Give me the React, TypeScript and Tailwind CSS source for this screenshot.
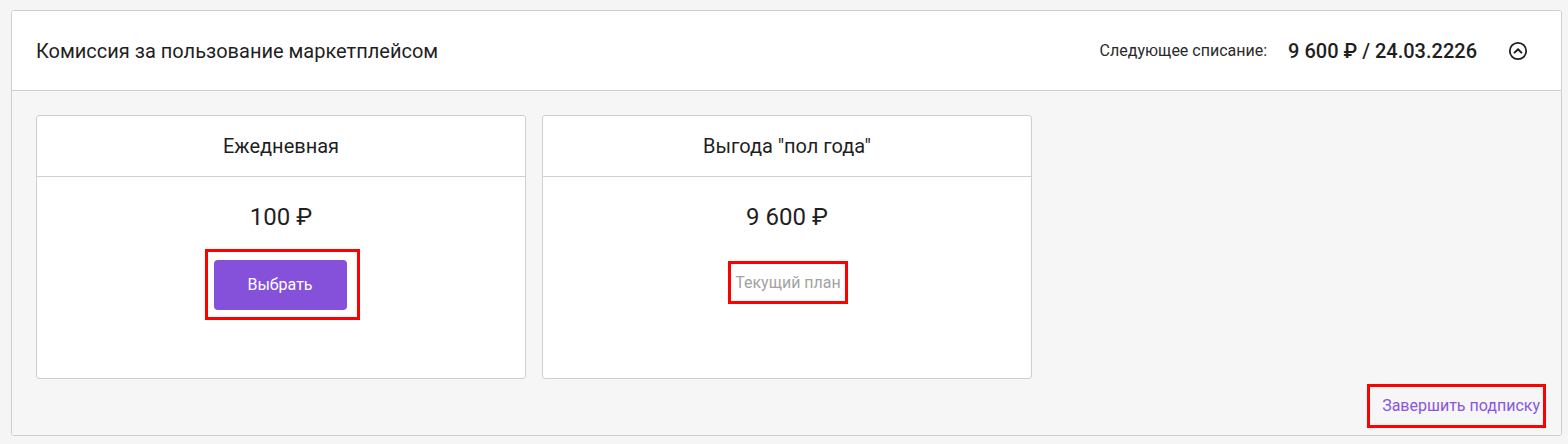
import * as React from "react";

type Plan = {
  title: string;
  price: string;
  current?: boolean;
};

const plans: Plan[] = [
  { title: "Ежедневная", price: "100 ₽" },
  { title: 'Выгода "пол года"', price: "9 600 ₽", current: true },
];

// chevron up in a circle, as in the header
const CollapseIcon: React.FC = () => (
  <svg width="20" height="20" viewBox="0 0 20 20" fill="none">
    <circle cx="10" cy="10" r="8.2" stroke="#1f1f1f" strokeWidth="1.8" />
    <path
      d="M6.6 11.6 L10 8.2 L13.4 11.6"
      stroke="#1f1f1f"
      strokeWidth="2"
      strokeLinecap="round"
      strokeLinejoin="round"
    />
  </svg>
);

const PlanCard: React.FC<{ plan: Plan }> = ({ plan }) => (
  <div className="flex h-[264px] w-[490px] flex-col rounded-[3px] border border-[#cfcfcf] bg-white">
    <div className="flex h-[61px] items-center justify-center border-b border-[#cfcfcf] text-[20px] text-[#1f1f1f]">
      {plan.title}
    </div>
    <div className="flex flex-col items-center pt-[26px]">
      <div className="text-[24px] leading-[28px] text-[#1f1f1f]">{plan.price}</div>
      {plan.current ? (
        <div className="mt-[30px] ml-[2px] border-[3px] border-[#ff0000] pl-[4px] pr-[4px] py-[6px] text-[16px] leading-[25px] text-[#a3a3a3]">
          Текущий план
        </div>
      ) : (
        <div className="mt-[18px] ml-[2px] border-[3px] border-[#ff0000] pt-[8px] pr-[10px] pb-[7px] pl-[6px]">
          <button className="h-[50px] w-[133px] rounded-[4px] bg-[#8551db] text-[16px] text-white">
            Выбрать
          </button>
        </div>
      )}
    </div>
  </div>
);

export default function App() {
  return (
    <div
      className="min-h-[444px] bg-[#f5f5f5] pt-[10px] pl-[11px] pr-[6px]"
      style={{ fontFamily: "Roboto, 'Noto Sans', sans-serif" }}
    >
      <div className="h-[426px] overflow-hidden rounded-[3px] border border-[#cfcfcf]">
        <div className="flex h-[80px] items-center justify-between border-b border-[#cfcfcf] bg-white pl-[24px] pr-[33px]">
          <div className="text-[20px] text-[#1f1f1f]">Комиссия за пользование маркетплейсом</div>
          <div className="flex items-center">
            <span className="text-[16px] text-[#2a2a2a]">Следующее списание:</span>
            <span className="ml-[21px] text-[20px] font-medium text-[#1f1f1f]">9 600 ₽ / 24.03.2226</span>
            <span className="ml-[31px] flex">
              <CollapseIcon />
            </span>
          </div>
        </div>
        <div className="flex h-[345px] flex-col bg-[#f6f6f6] px-[24px] pt-[24px]">
          <div className="flex gap-[16px]">
            {plans.map((p) => (
              <PlanCard key={p.title} plan={p} />
            ))}
          </div>
          <div className="mt-[5px] flex justify-end">
            <div className="-mr-[9px] border-[3px] border-[#ff0000] pl-[12px] pr-[3px] py-[6px] text-[16px] leading-[26px] text-[#8a55e0]">
              Завершить подписку
            </div>
          </div>
        </div>
      </div>
    </div>
  );
}
